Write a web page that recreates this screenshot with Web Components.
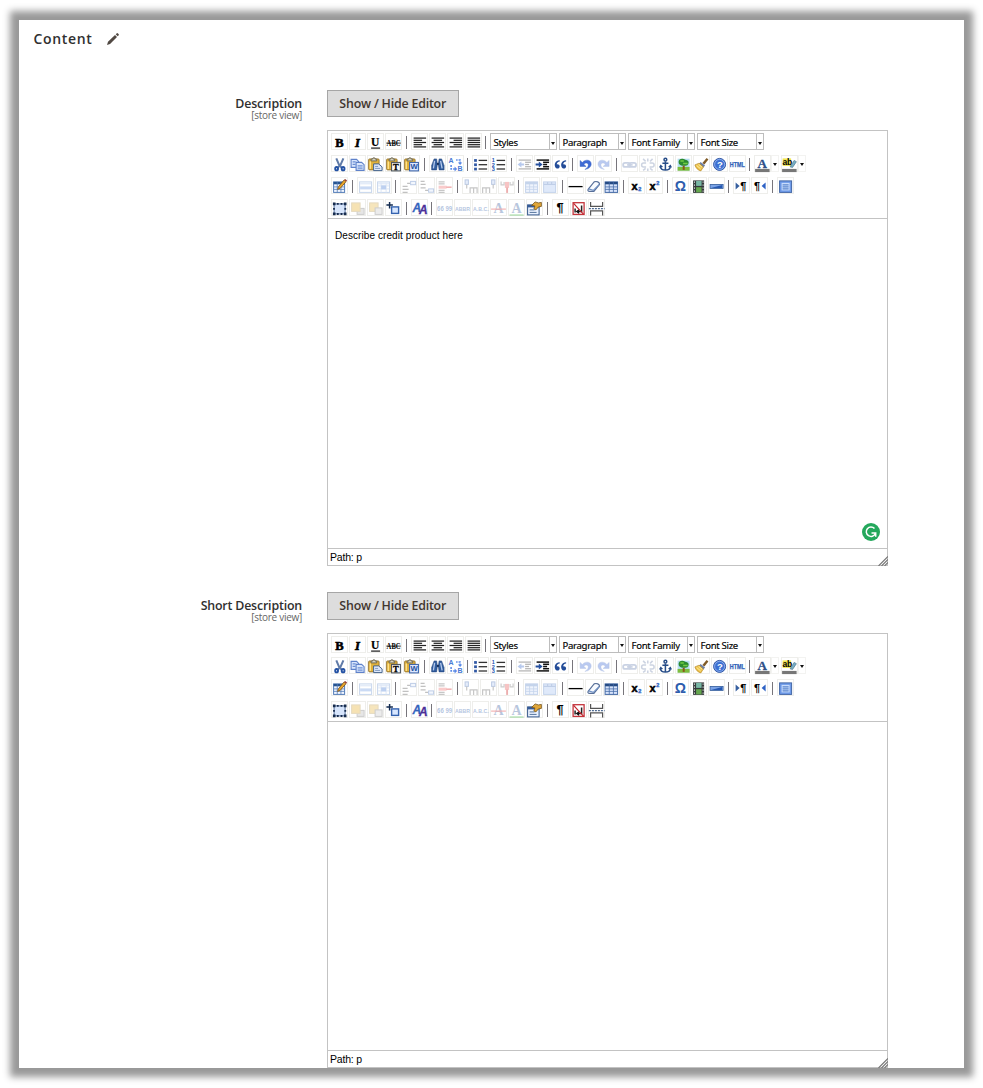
<!DOCTYPE html>
<html lang="en">
<head>
<meta charset="utf-8">
<title>Content</title>
<style>
  body { margin: 0; box-sizing: border-box; height: 1088px; padding-top: 20px; overflow: hidden; background: #fff; font-family: "Open Sans", "Noto Sans", sans-serif; color: #303030; }
  form-field + form-field { --button-height: 28px; --editor-height: 435px; }
</style>
</head>
<body>
<content-panel heading="Content">
  <form-field label="Description" scope="[store view]">
    <rich-editor path="Path: p" assistant>Describe credit product here</rich-editor>
  </form-field>
  <form-field label="Short Description" scope="[store view]">
    <rich-editor path="Path: p" can-undo="no"></rich-editor>
  </form-field>
</content-panel>

<script>
// Icon artwork, each on a 17 x 17 grid.
const T = (x, y, size, str, extra = '') => `<text x="${x}" y="${y}" font-size="${size}" ${extra}>${str}</text>`;
const SERIF = 'font-family="Liberation Serif, serif" font-weight="700"';
const SANS = 'font-family="Liberation Sans, sans-serif" font-weight="700"';
const lines = (rows, c = '#222', w = 1.25) => rows.map(([x1, x2, y]) => `<path d="M${x1} ${y}H${x2}" stroke="${c}" stroke-width="${w}"/>`).join('');
const clip = `<rect x="1.500" y="2.500" width="10.500" height="11" rx="1" fill="#dfb13c" stroke="#8c6a24" stroke-width=".8"/><path d="M4 4.500V2.700h1.500l.4-1.200h1.800l.4 1.200h1.500v1.800z" fill="#d8d4c0" stroke="#5b5540" stroke-width=".8"/><path d="M3.200 5v7.500" stroke="#ffe28a" stroke-width="1.400"/>`;
const grid = (x, y, w, h, s, f = '#fff', top = s) => `<rect x="${x}" y="${y}" width="${w}" height="${h}" fill="${f}" stroke="${s}"/><rect x="${x}" y="${y}" width="${w}" height="2.4" fill="${top}"/><path d="M${x + w / 3} ${y}v${h}M${x + 2 * w / 3} ${y}v${h}M${x} ${y + 5}h${w}M${x} ${y + 7.5}h${w}" stroke="${s}" stroke-width=".8"/>`;
const nums = [4, 8.3, 12.6];
const undo = '<path d="M3 4v6h6L6.800 8c2-2.600 5-1.200 4.300 1.300-.4 1.700-1.800 2.800-3.300 3.700 3.700-.4 6.200-2.400 6.300-5.300C14.200 3.300 8.500 2.300 5.200 6.100z" fill="#3f6bd6" stroke="#2450b4" stroke-width=".4"/>';
const ICONS = {
  bold: T(4.200, 12.600, 12.500, 'B', SERIF + ' stroke="#000" stroke-width=".6"'),
  italic: T(5.800, 12.600, 12.500, 'I', SERIF + ' font-style="italic" stroke="#000" stroke-width=".6"'),
  underline: T(4, 11.700, 11.500, 'U', SERIF + ' stroke="#000" stroke-width=".2"') + lines([[4, 13, 13.7]]),
  strike: T(1.5, 11.4, 8, 'ABC', SERIF + ' textLength="14" lengthAdjust="spacingAndGlyphs"') + lines([[1.2, 15.8, 8.7]], '#000', .8),
  left: lines([[2.5, 15, 3.7], [2.5, 11, 5.9], [2.5, 15, 8.1], [2.5, 11, 10.3], [2.5, 15, 12.5]]),
  center: lines([[2.5, 15, 3.7], [4.5, 13, 5.9], [2.5, 15, 8.1], [4.5, 13, 10.3], [2.5, 15, 12.5]]),
  right: lines([[2.5, 15, 3.7], [6.5, 15, 5.9], [2.5, 15, 8.1], [6.5, 15, 10.3], [2.5, 15, 12.5]]),
  full: lines([[2.5, 15, 3.7], [2.5, 15, 5.9], [2.5, 15, 8.1], [2.5, 15, 10.3], [2.5, 15, 12.5]]),
  cut: '<path d="M5.200 2 8 8.500l2.700 3M12.300 2 9.400 8.500l-3 3" fill="none" stroke="#607ba8" stroke-width="2"/><g fill="none" stroke="#2452a4" stroke-width="1.900"><ellipse cx="5.500" cy="12.300" rx="1.400" ry="1.700"/><ellipse cx="12" cy="12.300" rx="1.400" ry="1.700"/></g>',
  copy: '<g fill="#dbe7fd" stroke="#5f82ca" stroke-width="1.100"><path d="M2 3h5.500l2 2v6H2z"/><path d="M7 6h5.500L15 8.300V14H7z"/></g><path d="M3.500 5.500h3M3.500 8h3M8.500 9.500h5M8.500 11.800h5" stroke="#6d90d4" stroke-width="1.200"/>',
  paste: clip + '<path d="M6.500 7.500h5l3.500 3v3.700H6.500z" fill="#dfe9fb" stroke="#45658e" stroke-width="1"/><path d="M8 10h3M8 12h5" stroke="#809ac0"/>',
  pastetext: clip + '<rect x="6.500" y="6" width="8.800" height="8.500" fill="#f8f8f8" stroke="#424b55" stroke-width="1"/>' + T(8, 13.3, 8.500, 'T', SERIF + ' stroke="#000" stroke-width=".3"'),
  pasteword: clip + '<rect x="6.500" y="6" width="8.800" height="8.500" fill="#dde8ff" stroke="#335da7" stroke-width="1"/>' + T(7.300, 13, 7.700, 'W', SANS + ' fill="#24519e"'),
  search: '<g fill="#325e9f" stroke="#1d3d73" stroke-width=".5"><path d="M5 2.500h2.500l.7 4.500v1.500l-.7 5H2.500V9z"/><path d="M10 2.500h2.500L15 9v4.500h-5L9.300 8.500V7z"/></g><path d="M7.800 7.500h2" stroke="#172e58" stroke-width="2"/><path d="M5.500 4.500 4.300 12M11.500 4.500 13 12" stroke="#b5c9ec" stroke-width="1.300"/>',
  replace: T(1.500, 6.500, 7, 'A', SANS + ' fill="#4a7bd4"') + T(10.5, 14.5, 7, 'B', SANS + ' fill="#4a7bd4"') + '<path d="M4 8.500V12.500h4.500M13 7V3.500H9" fill="none" stroke="#5989e6" stroke-width="1.500" stroke-dasharray="2 1"/><path d="m7.500 10 2.500 2.500L7.500 15zM10.800 6h4.400L13 8.500z" fill="#5989e6"/>',
  bullist: nums.map(y => `<rect x="2" y="${y - 1.3}" width="2.800" height="2.700" fill="#3058a4"/>` + lines([[6.5, 15, y]], '#333', 1.3)).join(''),
  numlist: nums.map((y, i) => T(1.7, y + 1.9, 5.5, i + 1, SANS + ' fill="#2655b4"') + lines([[6.5, 15, y]], '#333', 1.3)).join(''),
  outdent: lines([[2.5, 15, 3.7], [9, 15, 5.9], [9, 13, 8.1], [9, 15, 10.3], [2.5, 15, 12.5]], '#333') + '<path d="M1.500 8.100 5.300 5v2H8v2.200H5.300v2z" fill="#3b6dce"/>',
  indent: lines([[2.5, 15, 3.7], [9, 15, 5.9], [9, 13, 8.1], [9, 15, 10.3], [2.5, 15, 12.5]], '#111', 1.5) + '<path d="M8.500 8.100 4.700 5v2H1.500v2.200h3.200v2z" fill="#244f9e"/>',
  quote: '<g fill="#234c98"><path d="M7.600 3.800C3.200 4.300 1.800 7.500 3.200 10.800c1.100 2.100 4.400 1.600 4.400-.7 0-1.800-1.600-2.400-2.900-2.100.1-1.700 1-2.700 2.900-3z"/><path d="M14 3.800C9.600 4.300 8.200 7.500 9.600 10.800c1.100 2.100 4.400 1.600 4.400-.7 0-1.800-1.600-2.400-2.900-2.100.1-1.700 1-2.700 2.900-3z"/></g>',
  undo,
  redo: `<g transform="matrix(-1 0 0 1 17 0)">${undo}</g>`,
  link: '<g fill="none" stroke="#6d85b4" stroke-width="1.700"><rect x="2" y="6.500" width="7" height="4" rx="2"/><rect x="8" y="6.500" width="7" height="4" rx="2"/><path d="M6 8.500h5.500"/></g>',
  unlink: '<g fill="none" stroke="#7186ab" stroke-width="1.500"><path d="M7 6.500H4.500a2 2 0 0 0 0 4H7M10.500 6.500H13a2 2 0 0 1 0 4h-2.500M8.700 2v3M8.700 12v2.500M4 2.500l2.500 2.500M13.500 2.500 11 5M4 14l2.500-2M13.500 14 11 12"/></g>',
  anchor: '<g fill="none" stroke="#274d88" stroke-width="1.500"><circle cx="8.300" cy="3.300" r="1.400"/><path d="M8.300 5v9M5.300 6.800h6M3.500 10c0 4.800 9.600 4.800 9.600 0"/></g><path d="m1.800 11 1.700-3L6 10.500zM10.900 10.500l2.500-2.500 1.600 3z" fill="#274d88"/>',
  image: '<rect x="2.500" y="2.300" width="12" height="12" fill="#b5def0"/><path d="M2.500 10.500h12v3.800h-12z" fill="#7ebd3c"/><path d="M7.600 9h2v4.500h-2z" fill="#895719"/><path d="M3.500 5.700c0-3 3-4 5-3s5.500 1 5 4c-.5 3-3 3-5 2.500-2 .5-5-.5-5-3.500z" fill="#2b8a2f"/><path d="M5.300 4.700h3.400M8 7.200h4.500" stroke="#72cd43" stroke-width="1.500"/>',
  cleanup: '<path d="m13.500 1.500 1.800 1.500-4 5-2-1.500z" fill="#805b28"/><path d="m7.500 5.500 4.500 3.500-2 2.300-4.200-3.800z" fill="#6b7fa6"/><path d="M6 6.800 1.800 8.500c1 3.300 3 5.200 6 6l2.400-4z" fill="#edc24b" stroke="#b88a2a" stroke-width=".7"/><path d="m3.500 9 4 3.500M5.500 8l3.700 3" stroke="#fff0a0"/>',
  help: '<circle cx="8.500" cy="8" r="6" fill="#3d70d2" stroke="#3359a5"/><circle cx="8.500" cy="8" r="5" fill="none" stroke="#9ebcf4" stroke-width=".8"/>' + T(5.8, 11.500, 9.500, '?', SANS + ' fill="#fff"'),
  html: T(.7, 10.5, 6.300, 'HTML', SANS + ' fill="#2f62b8" stroke="#2f62b8" stroke-width=".25" textLength="15" lengthAdjust="spacingAndGlyphs"'),
  forecolor: T(3.5, 11.500, 13, 'A', SERIF + ' fill="#2d4f88" stroke="#2d4f88" stroke-width=".3"') + '<path d="M1 12.500h14.500v3.200H1z" fill="#777"/>',
  backcolor: '<path d="M1.500 2h8.500v7.500H1.500z" fill="#f1e751"/>' + T(1.3, 8.7, 8.5, 'ab', SANS) + '<path d="m9 10.500 4-6.500 2.300 1.300L11.500 11z" fill="#79aec3" stroke="#426d83" stroke-width=".6"/><path d="M1 12.500h14.500v3.200H1z" fill="#777"/>',
  table: grid(2.5, 3.5, 11, 10.5, '#557eb9', '#f1f6ff', '#26538f') + '<path d="m6.500 11 .8-2.500L13 1.500l2 1.700L9 10z" fill="#e8a62a" stroke="#82541b" stroke-width=".8"/><path d="m13 1.500 1-1 2 1.700-1 1z" fill="#963c36"/>',
  rowprops: '<rect x="2.500" y="3.500" width="12" height="10.500" fill="#fff" stroke="#678fcc"/><path d="M3 4h11v2H3z" fill="#b5cbee"/><path d="M3 8h11v3H3z" fill="#6f9be2"/>',
  cellprops: '<rect x="2.500" y="3.500" width="12" height="10.500" fill="#fff" stroke="#678fcc"/><path d="M3 4h11v2H3z" fill="#b5cbee"/><path d="M6 4v10M11 4v10M3 7.500h11M3 10.500h11" stroke="#a3bee8"/><path d="M6 7h5v4H6z" fill="#4c80d6"/>',
  rowbefore: '<path d="M2.500 8h5M2.500 11h6M2.500 14h5M7 5h3" stroke="#555" stroke-width="1.300"/><rect x="10.500" y="3" width="5" height="3.300" fill="#dfe9fc" stroke="#4f78bd"/>',
  rowafter: '<path d="M2.500 3h4M2.500 6h5M2.500 9.500h5M7 12h3" stroke="#555" stroke-width="1.300"/><rect x="10.500" y="10.500" width="5" height="3.300" fill="#dfe9fc" stroke="#4f78bd"/>',
  rowdel: '<path d="M2.500 3.500h6M2.500 5.500h6M2.500 12h6M2.500 14h6" stroke="#666" stroke-width="1.100"/><rect x="2.500" y="7.300" width="8" height="3" fill="#ef7070"/><path d="M10 8.800h5.500" stroke="#d33" stroke-width="1.600"/>',
  colbefore: '<rect x="3" y="1.500" width="3.300" height="4.500" fill="#b7ccf3" stroke="#466fb5"/><path d="M4.600 6v4M8 14.500V9.500h3.500v5M11.500 9.500H15v5" fill="none" stroke="#666" stroke-width="1.200"/>',
  colafter: '<rect x="11.500" y="1.500" width="3.300" height="4.500" fill="#b7ccf3" stroke="#466fb5"/><path d="M13.100 6v4M2.500 14.500V9.500H6v5M6 9.500h3.500v5" fill="none" stroke="#666" stroke-width="1.200"/>',
  coldel: '<path d="M3 3v3.500h3V3.500M12 3.500v3h3V3" fill="none" stroke="#777" stroke-width="1.200"/><path d="M6.800 3.500H11v6H6.800z" fill="#e95f5f"/><path d="M9 9v5.500" stroke="#c22" stroke-width="1.900"/>',
  split: grid(2.5, 3.5, 12, 10.5, '#6089ca', '#d3e1fa'),
  merge: '<rect x="2.500" y="3.500" width="12" height="10.500" fill="#a9c4f2" stroke="#6089ca"/><path d="M2.500 6h12M6.500 3.500V6M10.500 3.500V6" stroke="#5079bd" stroke-width="1.200"/>',
  hr: lines([[1.5, 15.5, 8.2]], '#000', 1.3),
  eraser: '<path d="m3 11 6-7.500c2.500-1 5.500.2 5.500 2.500l-5.700 7H4.300C3 13 2.500 12 3 11z" fill="#f8fbff" stroke="#576f98" stroke-width="1.200"/><path d="m3.500 10.500 4.700 1.500 6-6" fill="none" stroke="#6f90c4" stroke-width="1.200"/>',
  visual: grid(2, 3.5, 12.5, 10.5, '#456ba6', '#d6e3fb', '#244a83'),
  sub: T(3.500, 11.5, 11, 'x', SANS + ' stroke="#000" stroke-width=".5"') + T(10.2, 12.5, 5.5, '2', SANS + ' fill="#386cc7" stroke="#386cc7" stroke-width=".4"'),
  sup: T(3.500, 12, 11, 'x', SANS + ' stroke="#000" stroke-width=".5"') + T(10.2, 7, 5.5, '2', SANS + ' fill="#386cc7" stroke="#386cc7" stroke-width=".4"'),
  omega: T(2.6, 12.5, 14, 'Ω', SANS + ' fill="#2e5dad"'),
  media: '<path d="M3 2h11v12.500H3z" fill="#343a3b"/><path d="M6 2.500h5.500v5H6z" fill="#78b7a5"/><path d="M6 8.800h5.500V14H6z" fill="#65a74e"/><path d="M4.400 3v11M13 3v11" stroke="#ccc" stroke-dasharray="1.500 1.500"/>',
  advhr: '<rect x="2" y="6" width="13" height="4" fill="#7ba3e6" stroke="#345d9c" stroke-width=".8"/><path d="M3 9.500 14 6.500v3H3z" fill="#2457b1"/>',
  ltr: '<path d="m2.500 4 4 3.500-4 3.500z" fill="#365f9f"/>' + T(7.2, 11.4, 11, '¶', SANS),
  rtl: '<path d="m14.500 4-4 3.500 4 3.500z" fill="#2e62c5"/>' + T(3, 11.4, 11, '¶', SANS),
  fullscreen: '<rect x="2.500" y="2.500" width="12" height="11.500" fill="#6f9bea" stroke="#4468a5"/><rect x="4.500" y="4.500" width="8" height="7.500" fill="#c9dcfb"/><path d="M5.500 6.500h6M5.500 8.500h6M5.500 10.500h6" stroke="#4273c2"/>',
  layer: '<rect x="3" y="3.500" width="11" height="10" fill="#d7e5fb" stroke="#5672a0" stroke-width="1"/><g fill="#172c4d"><path d="M1.800 2.200h2.600v2.600H1.800zM5.800 2.500h1.800v1.800H5.800zM9.500 2.500h1.800v1.800H9.500zM12.800 2.200h2.600v2.600h-2.600zM1.800 12.200h2.600v2.600H1.800zM5.800 12.700h1.800v1.800H5.800zM9.500 12.700h1.800v1.800H9.500zM12.800 12.200h2.600v2.600h-2.600zM2 7.500h1.800v1.800H2zM13.300 7.500h1.800v1.800h-1.800z"/></g>',
  forward: '<rect x="8" y="8" width="7" height="6" fill="#bbb" stroke="#777"/><rect x="2.500" y="2.500" width="8.500" height="8.500" fill="#e7b030" stroke="#b99b53"/>',
  backward: '<rect x="2.500" y="2.500" width="8.500" height="8.500" fill="#e7b848" stroke="#b99b53"/><rect x="8" y="7.500" width="7" height="6.500" fill="#ccc" stroke="#777"/>',
  abslayer: '<path d="M4.500 1.500v6.500M1.300 4.500h6.500" stroke="#142c50" stroke-width="1.500"/><rect x="6.500" y="6.500" width="7" height="6.500" fill="#d8e7ff" stroke="#3563af" stroke-width="1.400"/>',
  styleprops: T(1.5, 11.5, 12, 'A<tspan dx="-2.300" dy="1.800" fill="#4c2f98" stroke="#4c2f98">A</tspan>', SANS + ' font-style="italic" fill="#3564bd" stroke="#3564bd" stroke-width=".3"'),
  cite: T(1, 10.700, 7, '66 99', SANS + ' fill="#2f5daa" textLength="15" lengthAdjust="spacingAndGlyphs"'),
  abbr: T(1, 10.5, 6, 'ABBR', SANS + ' fill="#2f5daa" textLength="15" lengthAdjust="spacingAndGlyphs"'),
  acronym: T(1, 10.5, 6, 'A.B.C.', SANS + ' fill="#2f5daa" textLength="15.500" lengthAdjust="spacingAndGlyphs"'),
  del: T(3.5, 13, 14, 'A', SERIF + ' fill="#3d64a4"') + lines([[1, 15.8, 8.7]], '#e02020', 1.1),
  ins: T(3.5, 12.7, 14, 'A', SERIF + ' fill="#3d64a4"') + lines([[1.5, 15.5, 14.6]], '#3cb83c', 1.4),
  attribs: '<rect x="1.500" y="4.500" width="11.500" height="10" fill="#eaf2ff" stroke="#34588c"/><path d="M1.500 4.500H13V7H1.500z" fill="#365c98"/><path d="M3.500 9.500h5M3.500 12h7" stroke="#55749c"/><path d="M5.500 5 9 1.500l3.300 1 3-.5v4l-3 .5-2.500 3-2-1 1-3z" fill="#e0a638" stroke="#76551e" stroke-width=".8"/>',
  visualchars: T(4.500, 12, 12.800, '¶', SANS),
  nonbreaking: '<rect x="3" y="2.300" width="11" height="11.700" fill="#fff" stroke="#c4353c" stroke-width="1.300"/><path d="M11.500 5v6H8M5 8v4" fill="none" stroke="#222" stroke-width="1.500"/><path d="m5.500 11 3.500-2.500v5z" fill="#111"/><path d="m3.500 3 10 11" stroke="#c4232b" stroke-width="1.200"/>',
  pagebreak: '<path d="M2.500 1.500V6h12V1.500M2.500 15v-4.500h12V15" fill="none" stroke="#555" stroke-width="1.200"/><path d="M.8 8.200h15.700" stroke="#4d6a91" stroke-width="1.100" stroke-dasharray="2 1"/>'
};

const define = (tag, html, setup) => {
  const tpl = document.createElement('template');
  tpl.innerHTML = html;
  customElements.define(tag, class extends HTMLElement {
    constructor() {
      super();
      this.attachShadow({ mode: 'open' }).append(tpl.content.cloneNode(true));
    }
    connectedCallback() { if (setup) setup(this, this.shadowRoot); }
  });
};

define('tool-icon', `<style>
  :host { box-sizing: border-box; width: 17px; height: 17px; margin-right: 1px; flex: none; box-shadow: inset 0 0 0 1px #eeeeeb; display: block; }
  :host([disabled]) g.art { opacity: .36; }
  svg { display: block; width: 17px; height: 17px; overflow: visible; }
</style><svg viewBox="0 0 17 17" aria-hidden="true"><g class="art" transform="translate(.1 1.400)"></g></svg>`,
(el, root) => { root.querySelector('.art').innerHTML = ICONS[el.getAttribute('name')]; });

define('tool-separator', `<style>
  :host { display: block; width: 7.5px; height: 17px; flex: none; }
  i { display: block; width: 1px; height: 13px; margin: 3px 0 0 2.500px; background: #77757b; }
</style><i></i>`);

define('split-tool', `<style>
  :host { display: flex; width: 26.5px; flex: none; box-sizing: border-box; }
  i { width: 8px; margin-left: -1px; height: 17px; display: grid; place-items: center; box-shadow: inset 0 0 0 1px #f3f3f1; }
  i::after { content: ""; margin-top: 2px; border: 2.5px solid transparent; border-top: 3px solid #111; border-bottom: 0; }
</style><tool-icon></tool-icon><i></i>`,
(el, root) => {
  const icon = document.createElement('tool-icon');
  icon.setAttribute('name', el.getAttribute('name'));
  root.querySelector('tool-icon').replaceWith(icon);
});

define('tool-select', `<style>
  :host { display: flex; box-sizing: border-box; width: 67px; height: 17px; margin-right: 2px; flex: none; border: 1px solid #bdbdbd; background: #fff;
    font: 9.600px/18px "Noto Sans", sans-serif; letter-spacing: -.32px; color: #000; }
  span { flex: 1; padding-left: 2.500px; white-space: nowrap; -webkit-text-stroke: .15px #000; }
  i { width: 6px; border-left: 1px solid #bdbdbd; display: grid; place-items: center; }
  i::after { content: ""; margin-top: 3px; border: 2.500px solid transparent; border-top: 3px solid #111; border-bottom: 0; }
</style><span><slot></slot></span><i></i>`);

// Toolbar rows: "|" separates groups, "-" marks a disabled tool, "+" a split button, "=" a list box.
const rowsFor = undoable => [
  'bold italic underline strike | left center right full | =Styles =Paragraph =Font_Family =Font_Size',
  `cut copy paste pastetext pasteword | search replace | bullist numlist | -outdent indent quote | ${undoable ? '' : '-'}undo -redo | -link -unlink anchor image cleanup help html | +forecolor +backcolor`,
  'table | -rowprops -cellprops | -rowbefore -rowafter -rowdel | -colbefore -colafter -coldel | -split -merge | hr eraser visual | sub sup | omega media advhr | ltr rtl | fullscreen',
  'layer -forward -backward abslayer | styleprops | -cite -abbr -acronym -del -ins attribs | visualchars nonbreaking pagebreak'
];

define('editor-toolbar', `<style>
  :host { display: block; box-sizing: border-box; height: 88px; padding: 2.400px 3px 0; border-bottom: 1px solid #c3c3c3; }
  :host([no-undo]) { padding-top: 1.600px; }
  div { display: flex; height: 21.800px; }
</style>`,
(el, root) => {
  for (const row of rowsFor(!el.hasAttribute('no-undo'))) {
    const div = document.createElement('div');
    for (const item of row.split(' ')) {
      const kind = item[0], name = item.slice(1);
      let node;
      if (kind === '|') node = document.createElement('tool-separator');
      else if (kind === '=') { node = document.createElement('tool-select'); node.textContent = name.replace('_', ' '); }
      else if (kind === '+') { node = document.createElement('split-tool'); node.setAttribute('name', name); }
      else {
        node = document.createElement('tool-icon');
        node.setAttribute('name', kind === '-' ? name : item);
        if (kind === '-') node.setAttribute('disabled', '');
      }
      div.append(node);
    }
    root.append(div);
  }
});

define('rich-editor', `<style>
  :host { display: flex; flex-direction: column; box-sizing: border-box; width: 561px; height: var(--editor-height, 436px); border: 1px solid #c3c3c3; background: #fff;
    font-family: "Liberation Sans", Arial, sans-serif; color: #000; position: relative; }
  .body { flex: 1; padding: 10px 7px; font-size: 10px; line-height: 14px; letter-spacing: .08px; }
  .status { box-sizing: border-box; height: 17px; border-top: 1px solid #c3c3c3; display: flex; justify-content: space-between; align-items: flex-end; padding-left: 2px; font-size: 10.500px; line-height: 16px; letter-spacing: -.2px; }
  .status svg { display: block; margin: 0 -1px -1px 0; }
  .helper { position: absolute; right: 6.500px; bottom: 23.500px; display: none; }
  :host([assistant]) .helper { display: block; }
</style>
<div class="body"><slot></slot></div>
<svg class="helper" width="19" height="19" viewBox="0 0 19 19"><circle cx="9" cy="9" r="9" fill="#24a85c"/><path d="M12.500 5.600A4.700 4.700 0 1 0 13.300 10.500M9.500 10h4.200v3.700" fill="none" stroke="#fff" stroke-width="1.500"/></svg>
<div class="status"><span></span><svg width="10" height="10" viewBox="0 0 10 10"><path d="M.5 10 10 .5M3.500 10 10 3.500M6.500 10 10 6.500" stroke="#777" stroke-width="1.200"/></svg></div>`,
(el, root) => {
  const bar = document.createElement('editor-toolbar');
  if (el.getAttribute('can-undo') === 'no') bar.setAttribute('no-undo', '');
  root.querySelector('.body').before(bar);
  root.querySelector('.status span').textContent = el.getAttribute('path');
});

define('toggle-button', `<style>
  :host { display: block; width: 131.500px; }
  button { box-sizing: border-box; width: 100%; height: var(--button-height, 27px); padding: 0 0 1px; border: 1px solid #a6a6a6; background: #ddd; color: #41362f;
    font: 570 12.400px/25px "Open Sans", sans-serif; letter-spacing: -.2px; display: block; white-space: nowrap; }
</style><button type="button"><slot></slot></button>`);

define('form-field', `<style>
  :host { display: grid; grid-template-columns: 283px 561px; column-gap: 25px; height: 502px; }
  .label { text-align: right; padding-top: 6px; }
  b { display: block; font-weight: 570; font-size: 12.400px; line-height: 15px; letter-spacing: -.18px; color: #303030; }
  small { display: block; font-size: 10px; line-height: 9px; letter-spacing: -.28px; color: #666; }
  .control { display: grid; grid-template-rows: var(--button-height, 27px) var(--editor-height, 436px); row-gap: 13px; align-content: start; }
</style>
<div class="label"><b></b><small></small></div>
<div class="control"><toggle-button>Show / Hide Editor</toggle-button><slot></slot></div>`,
(el, root) => {
  root.querySelector('b').textContent = el.getAttribute('label');
  root.querySelector('small').textContent = el.getAttribute('scope');
});

define('content-panel', `<style>
  :host { display: block; box-sizing: border-box; width: 945px; height: 1048px; margin-left: 19px; overflow: hidden; background: #fff; box-shadow: 0 0 7px 9px #999; }
  header { display: flex; align-items: center; gap: 15px; height: 37px; padding-left: 14.500px; margin-bottom: 33px; }
  h2 { margin: 0; font: 570 14px/20px "Open Sans", sans-serif; letter-spacing: .65px; color: #303030; }
</style>
<header><h2></h2><svg width="12" height="12" viewBox="0 0 12 12" fill="#514943"><path d="M0 12 1 8.700 8 2l2 2-7 6.900zM8.700 1.300 9.900.2Q10.400-.1 11 .4l.7.8q.4.5 0 1L10.700 3.300z"/></svg></header>
<slot></slot>`,
(el, root) => { root.querySelector('h2').textContent = el.getAttribute('heading'); });
</script>
</body>
</html>
